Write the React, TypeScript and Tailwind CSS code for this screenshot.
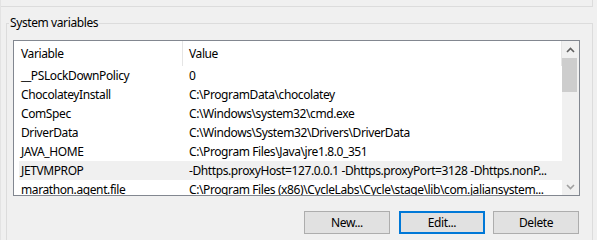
const rows: [string, string][] = [
  ['__PSLockDownPolicy', '0'],
  ['ChocolateyInstall', 'C:\\ProgramData\\chocolatey'],
  ['ComSpec', 'C:\\Windows\\system32\\cmd.exe'],
  ['DriverData', 'C:\\Windows\\System32\\Drivers\\DriverData'],
  ['JAVA_HOME', 'C:\\Program Files\\Java\\jre1.8.0_351'],
  ['JETVMPROP', '-Dhttps.proxyHost=127.0.0.1 -Dhttps.proxyPort=3128 -Dhttps.nonP...'],
  ['marathon.agent.file', 'C:\\Program Files (x86)\\CycleLabs\\Cycle\\stage\\lib\\com.jaliansystem...'],
];

function Button({ label, focused }: { label: string; focused?: boolean }) {
  return (
    <button
      className={
        focused
          ? 'w-[86px] h-[23px] bg-[#e1e1e1] border-2 border-[#0078d7] text-black'
          : 'w-[86px] h-[23px] bg-[#e1e1e1] border border-[#adadad] text-black'
      }
    >
      {label}
    </button>
  );
}

export default function App() {
  return (
    <div
      className="w-[597px] h-[240px] bg-[#f0f0f0] overflow-hidden text-[12px] tracking-[-0.4px] text-black border-l border-[#e3e3e3]"
      style={{ fontFamily: '"Segoe UI", "Noto Sans", sans-serif' }}
    >
      {/* bottom edge of the box above */}
      <div className="w-[592px] h-[7px] border-b border-r border-[#dcdcdc]" />

      {/* System variables group */}
      <div className="relative mt-[16px] ml-[5px] w-[587px] h-[240px] border border-[#dcdcdc] pt-[16px] pl-[6px]">
        <span className="absolute -top-[10px] left-[2px] bg-[#f0f0f0] px-[1px] leading-[18px]">
          System variables
        </span>

        {/* list view */}
        <div className="w-[567px] h-[156px] bg-white border border-[#828790] flex overflow-hidden">
          <div className="w-[548px] flex flex-col">
            <div className="h-[25px] flex items-center shrink-0">
              <div className="w-[169px] h-full flex items-center pl-[7px] border-r border-[#e5e5e5]">Variable</div>
              <div className="flex-1 h-full flex items-center pl-[6px] border-r border-[#e5e5e5]">Value</div>
            </div>
            {rows.map(([name, value]) => (
              <div
                key={name}
                className={
                  name === 'JETVMPROP'
                    ? 'h-[19px] shrink-0 ml-[5px] flex items-center bg-[#f0f0f0] whitespace-nowrap'
                    : 'h-[19px] shrink-0 ml-[5px] flex items-center whitespace-nowrap'
                }
              >
                <div className="w-[164px] pl-[2px]">{name}</div>
                <div className="flex-1 pl-[6px] overflow-hidden">{value}</div>
              </div>
            ))}
          </div>

          {/* scrollbar */}
          <div className="w-[17px] h-full bg-[#f0f0f0] flex flex-col items-center">
            <div className="h-[17px] w-full flex items-center justify-center">
              <svg width="9" height="6" viewBox="0 0 9 6">
                <path d="M1 5 L4.5 1.5 L8 5" fill="none" stroke="#606060" strokeWidth="1.6" />
              </svg>
            </div>
            <div className="w-[15px] h-[34px] bg-[#cdcdcd] ml-[-2px]" />
            <div className="flex-1" />
            <div className="h-[17px] w-full flex items-center justify-center">
              <svg width="9" height="6" viewBox="0 0 9 6">
                <path d="M1 1 L4.5 4.5 L8 1" fill="none" stroke="#a0a0a0" strokeWidth="1.6" />
              </svg>
            </div>
          </div>
        </div>

        {/* buttons */}
        <div className="flex mt-[15px] ml-[291px] gap-[8px]">
          <Button label="New..." />
          <div className="ml-[1px]">
            <Button label="Edit..." focused />
          </div>
          <Button label="Delete" />
        </div>
      </div>
    </div>
  );
}
